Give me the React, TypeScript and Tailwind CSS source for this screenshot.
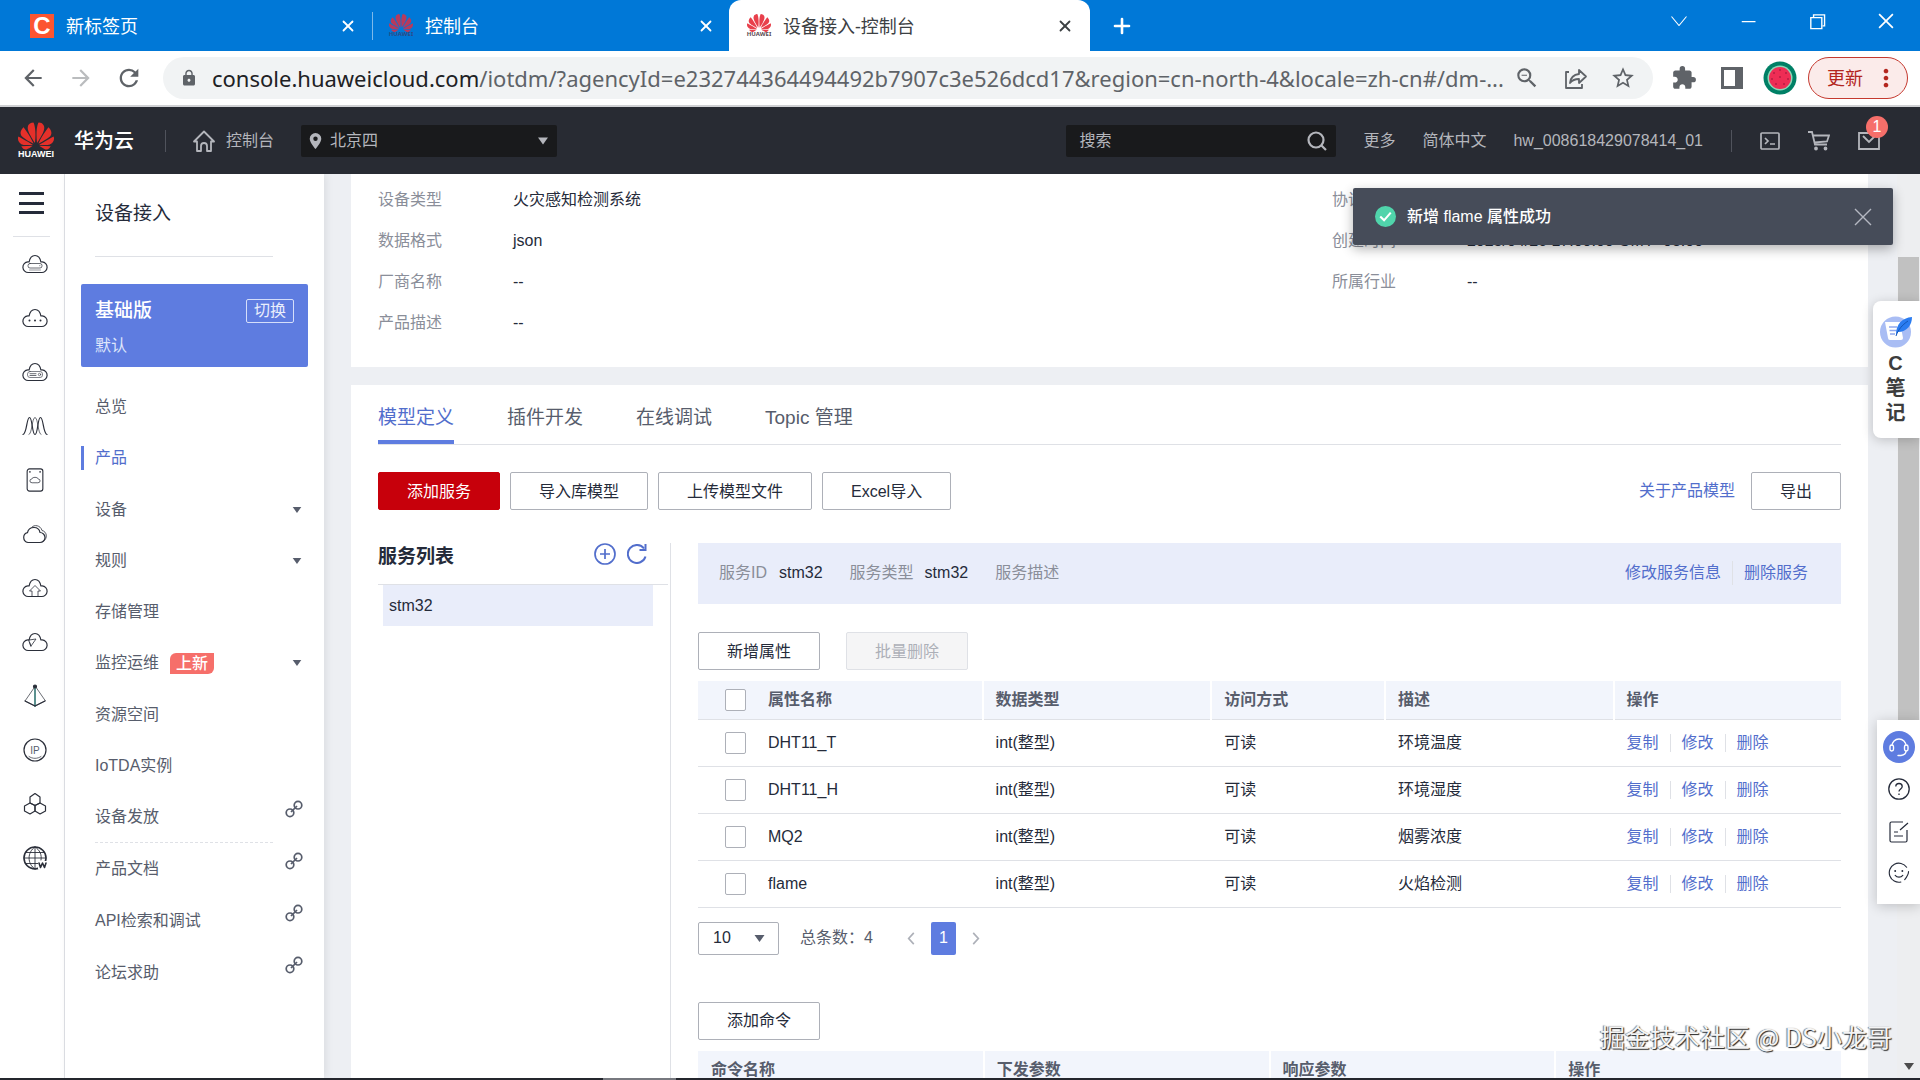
import React, { useState } from 'react';
import { Plus, X } from 'lucide-react';
import {
  MdArrowBack,
  MdArrowForward,
  MdExtension,
  MdLock,
  MdMoreVert,
  MdRefresh,
  MdStarBorder,
  MdZoomOut,
} from 'react-icons/md';
import { SiHuawei } from 'react-icons/si';
import { VscChromeClose, VscChromeMinimize, VscChromeRestore } from 'react-icons/vsc';

const CLOUD =
  'M6.5 18.5a5.3 5.3 0 0 1-.6-10.6c.6 0 1.2.1 1.2.1C7.8 4 10 1.5 13 1.5s5.2 2.5 5.9 6.5c0 0 .6-.1 1.2-.1a5.3 5.3 0 0 1-.6 10.6z';

const menuItems = [
  { label: '总览' },
  { label: '产品', active: true },
  { label: '设备', expandable: true },
  { label: '规则', expandable: true },
  { label: '存储管理' },
  { label: '监控运维', expandable: true, badge: '上新' },
  { label: '资源空间' },
  { label: 'IoTDA实例' },
];

const linkItems = ['设备发放', '产品文档', 'API检索和调试', '论坛求助'];

const properties = [
  { name: 'DHT11_T', type: 'int(整型)', access: '可读', desc: '环境温度' },
  { name: 'DHT11_H', type: 'int(整型)', access: '可读', desc: '环境湿度' },
  { name: 'MQ2', type: 'int(整型)', access: '可读', desc: '烟雾浓度' },
  { name: 'flame', type: 'int(整型)', access: '可读', desc: '火焰检测' },
];

const productInfo = [
  ['设备类型', '火灾感知检测系统'],
  ['数据格式', 'json'],
  ['厂商名称', '--'],
  ['产品描述', '--'],
];

const productMeta = [
  ['协议类型', 'MQTT'],
  ['创建时间', '2023/04/26 17:00:00 GMT+08:00'],
  ['所属行业', '--'],
];

const tabs = ['模型定义', '插件开发', '在线调试', 'Topic 管理'];

/* ---------- small pieces ---------- */

function Caret({ className = '' }: { className?: string }) {
  return (
    <svg viewBox="0 0 10 7" className={className} fill="currentColor" aria-hidden="true">
      <path d="M0 0h10L5 7z" />
    </svg>
  );
}

function Favicon({ dimmed }: { dimmed?: boolean }) {
  return (
    <span className={`flex w-6 flex-col items-center ${dimmed ? 'text-[#b73a5c]' : 'text-[#e8404c]'}`}>
      <SiHuawei size={24} className="-mt-1 -mb-1" />
      <span className={`text-[6px] leading-[6px] font-bold ${dimmed ? 'text-[#2c4a86]' : 'text-[#5a4a50]'}`}>HUAWEI</span>
    </span>
  );
}

function RailIcon({ children, box = '0 0 26 20' }: { children: React.ReactNode; box?: string }) {
  return (
    <a href="#" className="flex h-[54px] items-center justify-center pl-[6px]" aria-label="服务">
      <svg viewBox={box} className="h-6 w-[26px]" fill="none" stroke="#2b2f3a" strokeWidth="1.2" strokeLinejoin="round" strokeLinecap="round">
        {children}
      </svg>
    </a>
  );
}

function LinkIcon() {
  return (
    <svg viewBox="0 0 18 18" className="h-[18px] w-[18px]" fill="none" stroke="#575d6c" strokeWidth="1.7" aria-hidden="true">
      <circle cx="5" cy="12.8" r="3.8" />
      <circle cx="13" cy="5.2" r="3.8" />
      <path d="M6 12l6-6" />
    </svg>
  );
}

function Button({ children, primary, disabled }: { children: React.ReactNode; primary?: boolean; disabled?: boolean }) {
  const look = primary
    ? 'border-[#c7000b] bg-[#c7000b] text-white'
    : disabled
      ? 'border-[#dfe1e6] bg-[#f5f5f6] text-[#adb0b8]'
      : 'border-[#adb0b8] bg-white text-[#252b3a]';
  return (
    <button type="button" disabled={disabled} className={`h-[38px] shrink-0 rounded-xs border px-7 pt-px ${look}`}>
      {children}
    </button>
  );
}

function Checkbox({ label }: { label: string }) {
  return (
    <input
      type="checkbox"
      aria-label={label}
      className="block h-[22px] w-[21px] appearance-none rounded-xs border border-[#adb0b8] bg-white checked:bg-[#5e7ce0]"
    />
  );
}

function InfoList({ rows }: { rows: string[][] }) {
  return (
    <dl className="flex flex-col gap-[17px]">
      {rows.map(([label, value]) => (
        <div key={label} className="flex leading-6">
          <dt className="w-[135px] shrink-0 text-[#8a8e99]">{label}</dt>
          <dd className="whitespace-nowrap text-[#252b3a]">{value}</dd>
        </div>
      ))}
    </dl>
  );
}

/* ---------- browser frame ---------- */

function BrowserTabs() {
  return (
    <div className="flex h-[51px] shrink-0 bg-[#0078d7] text-lg text-white">
      <div className="flex w-[373px] items-center pl-[30px]">
        <span className="flex h-6 w-6 items-center justify-center bg-[#fc5531] font-['Liberation_Sans',sans-serif] text-2xl font-bold">C</span>
        <span className="ml-3 flex-1">新标签页</span>
        <button type="button" aria-label="关闭标签页" className="mr-[15px]"><X size={18} strokeWidth={2.4} /></button>
        <span className="h-7 w-px bg-[#7db9ea]" />
      </div>
      <div className="flex w-[356px] items-center pl-4">
        <Favicon dimmed />
        <span className="ml-3 flex-1">控制台</span>
        <button type="button" aria-label="关闭标签页" className="mr-[14px]"><X size={18} strokeWidth={2.4} /></button>
      </div>
      <div className="flex w-[361px] items-center rounded-t-xl bg-white pl-[18px] text-[#3c4043]">
        <Favicon />
        <span className="ml-3 flex-1">设备接入-控制台</span>
        <button type="button" aria-label="关闭标签页" className="mr-4"><X size={18} strokeWidth={2.4} /></button>
      </div>
      <button type="button" aria-label="新标签页" className="ml-5"><Plus size={24} strokeWidth={2.6} /></button>
      <div className="ml-auto flex h-[42px] items-center">
        <button type="button" aria-label="搜索标签页" className="flex w-[69px] justify-center">
          <svg viewBox="0 0 16 10" className="h-[10px] w-4" fill="none" stroke="white" strokeWidth="1.1"><path d="M.5.5 8 9.5 15.5.5" /></svg>
        </button>
        <button type="button" aria-label="最小化" className="flex w-[69px] justify-center"><VscChromeMinimize size={20} /></button>
        <button type="button" aria-label="还原" className="flex w-[69px] justify-center"><VscChromeRestore size={22} /></button>
        <button type="button" aria-label="关闭" className="flex w-[69px] justify-center"><VscChromeClose size={22} /></button>
      </div>
    </div>
  );
}

function AddressBar() {
  return (
    <div className="flex h-14 shrink-0 items-center border-b-2 border-[#d0d1d4] bg-white text-[#5f6368]">
      <button type="button" aria-label="后退" className="ml-5"><MdArrowBack size={26} /></button>
      <button type="button" aria-label="前进" className="ml-[22px] text-[#babcbe]"><MdArrowForward size={26} /></button>
      <button type="button" aria-label="刷新" className="ml-[21px]"><MdRefresh size={28} /></button>
      <div className="ml-5 flex h-[42px] min-w-0 flex-1 items-center rounded-full bg-[#f1f3f4] px-[17px]">
        <MdLock size={18} className="shrink-0" />
        <p className="ml-[14px] min-w-0 flex-1 text-[22px] whitespace-nowrap">
          <span className="text-[#202124]">console.huaweicloud.com</span>
          /iotdm/?agencyId=e232744364494492b7907c3e526dcd17&amp;region=cn-north-4&amp;locale=zh-cn#/dm-...
        </p>
        <button type="button" aria-label="缩放" className="ml-2"><MdZoomOut size={26} /></button>
        <button type="button" aria-label="分享" className="ml-6">
          <svg viewBox="0 0 24 24" className="h-6 w-6" fill="none" stroke="currentColor" strokeWidth="1.8" strokeLinejoin="round">
            <path d="M5 6H2v16h16v-4" />
            <path d="M6 17c.6-5.5 3.8-8.5 9-9V4l7 6.5-7 6.5v-4c-4 0-6.8 1-9 4z" />
          </svg>
        </button>
        <button type="button" aria-label="收藏" className="ml-[22px]"><MdStarBorder size={26} /></button>
      </div>
      <button type="button" aria-label="扩展程序" className="ml-[18px]"><MdExtension size={26} /></button>
      <button type="button" aria-label="侧边栏" className="ml-6">
        <svg viewBox="0 0 22 22" className="h-[22px] w-[22px]" fill="none" stroke="currentColor" strokeWidth="3">
          <path d="M1.5 1.5h19v19h-19z" />
          <path d="M15.5 1.5h5v19h-5z" fill="currentColor" />
        </svg>
      </button>
      <svg viewBox="0 0 34 34" className="ml-5 h-[34px] w-[34px]" role="img" aria-label="头像">
        <circle cx="17" cy="17" r="16.5" fill="#008066" />
        <circle cx="17" cy="17" r="12.5" fill="#8ed8b8" />
        <circle cx="17" cy="17" r="11" fill="#ee2d55" />
        <g fill="#7a1030">
          {[[17, 9], [11, 12], [23, 12], [9, 18], [25, 18], [13, 23], [21, 23], [17, 16]].map(([x, y]) => (
            <circle key={`${x}-${y}`} cx={x} cy={y} r="0.7" />
          ))}
        </g>
      </svg>
      <button type="button" className="mr-3 ml-[11px] flex h-[42px] w-[100px] items-center justify-between rounded-full border border-[#c5392f] bg-[#fbebea] pr-[7px] pl-[18px] text-lg text-[#b3261e]">
        更新
        <MdMoreVert size={28} />
      </button>
    </div>
  );
}

/* ---------- console ---------- */

function ConsoleHeader() {
  return (
    <header className="flex h-[67px] shrink-0 items-center bg-[#282b33] text-[#b4b6bc]">
      <a href="#" className="ml-[18px] flex w-9 flex-col items-center text-white">
        <SiHuawei size={36} className="-mt-1 -mb-1 text-[#e5302a]" />
        <span className="text-[9px] leading-[9px] font-bold">HUAWEI</span>
      </a>
      <span className="ml-5 text-xl font-medium text-white">华为云</span>
      <span className="ml-[31px] h-[22px] w-px bg-[#50535c]" />
      <a href="#" className="ml-[27px] flex items-center gap-[11px]">
        <svg viewBox="0 0 22 22" className="h-[22px] w-[22px]" fill="none" stroke="currentColor" strokeWidth="1.8" strokeLinejoin="round">
          <path d="M1 11.5 11 1.5l10 10h-3V21h-4v-5a3 3 0 0 0-6 0v5H4v-9.5z" />
        </svg>
        控制台
      </a>
      <div className="relative ml-[27px] flex h-8 w-[256px] items-center">
        <select aria-label="区域" className="h-full w-full appearance-none rounded-xs bg-[#191a1c] pl-[29px]">
          <option>北京四</option>
        </select>
        <svg viewBox="0 0 14 18" className="pointer-events-none absolute left-2 h-4 w-[13px]" fill="currentColor">
          <path fillRule="evenodd" d="M7 0a6.5 6.5 0 0 1 6.5 6.5C13.5 11 7 18 7 18S.5 11 .5 6.5A6.5 6.5 0 0 1 7 0zm0 4a2.5 2.5 0 1 0 0 5 2.5 2.5 0 0 0 0-5z" />
        </svg>
        <Caret className="pointer-events-none absolute right-[9px] h-2 w-[10px]" />
      </div>

      <form className="ml-auto flex h-8 w-[270px] items-center rounded-xs bg-[#191a1c] pr-[9px] pl-[13px]">
        <input type="text" aria-label="搜索" placeholder="搜索" className="min-w-0 flex-1 bg-transparent placeholder:text-[#b4b6bc]" />
        <button type="button" aria-label="搜索">
          <svg viewBox="0 0 20 20" className="h-5 w-5" fill="none" stroke="currentColor" strokeWidth="2.2">
            <circle cx="9" cy="9" r="7.5" />
            <path d="m14.5 14.5 4.5 4.5" />
          </svg>
        </button>
      </form>
      <a href="#" className="ml-[27px]">更多</a>
      <a href="#" className="ml-[27px]">简体中文</a>
      <a href="#" className="ml-[27px]">hw_008618429078414_01</a>
      <span className="ml-7 h-[22px] w-px bg-[#50535c]" />
      <button type="button" aria-label="CloudShell" className="ml-7">
        <svg viewBox="0 0 20 18" className="h-[18px] w-5" fill="none" stroke="currentColor" strokeWidth="1.7">
          <rect x="1" y="1" width="18" height="16" rx="1" />
          <path d="m5 6 3 3-3 3M10 12h5" />
        </svg>
      </button>
      <button type="button" aria-label="购物车" className="ml-7">
        <svg viewBox="0 0 22 20" className="h-5 w-[22px]" fill="none" stroke="currentColor" strokeWidth="1.8">
          <path d="M0 1h4l3 12.5h12M5 4.5h16l-2 6-12.5 1" />
          <circle cx="8" cy="17.5" r="1" />
          <circle cx="17.5" cy="17.5" r="1" />
        </svg>
      </button>
      <button type="button" aria-label="消息" className="relative mr-10 ml-7">
        <svg viewBox="0 0 22 18" className="h-[18px] w-[22px]" fill="none" stroke="currentColor" strokeWidth="1.8">
          <path d="M1 1h20v16H1z" />
          <path d="m5 4 6 6 6-6" />
        </svg>
        <span className="absolute -top-4 left-2 flex h-[22px] w-[22px] items-center justify-center rounded-full bg-[#f66f6a] text-white">1</span>
      </button>
    </header>
  );
}

function ServiceRail() {
  return (
    <nav className="w-[65px] shrink-0 border-r border-[#dfe1e6] bg-white">
      <button type="button" aria-label="服务列表" className="mt-[18px] ml-[19px] flex h-[22px] w-[25px] flex-col justify-between">
        <span className="h-[3px] w-full bg-[#252b3a]" />
        <span className="h-[3px] w-full bg-[#252b3a]" />
        <span className="h-[3px] w-full bg-[#252b3a]" />
      </button>
      <div className="mt-[22px] ml-[13px] w-[37px] border-t border-[#dfe1e6]" />
      <RailIcon>
        <path d={CLOUD} />
        <rect x="6" y="9.5" width="14" height="4.5" rx="2" strokeWidth=".7" />
        <path d="M7.5 16h11M17.5 11.7h.5" strokeWidth=".5" />
      </RailIcon>
      <RailIcon>
        <path d={CLOUD} />
        <path d="M7.5 12.5h.01M13 12.5h.01M18.5 12.5h.01" strokeWidth="2" />
      </RailIcon>
      <RailIcon>
        <path d={CLOUD} />
        <rect x="5.5" y="9.5" width="15" height="6" rx="2.5" strokeWidth=".6" />
        <path d="M8 11.7h6M8 13.5h6" strokeWidth=".7" />
        <circle cx="17.5" cy="12.5" r="1.2" strokeWidth=".6" />
      </RailIcon>
      <RailIcon>
        <path d="M1 18.5c4-1 3.5-17 6.500-17s2.500 17 5.500 17 2.500-17 5.500-17 2.500 16 6.500 17" />
        <path d="M7 18.5c3 0 3-17 6-17s3 17 6 17" strokeWidth=".7" />
      </RailIcon>
      <RailIcon box="0 0 24 26">
        <rect x="3.5" y="1" width="17" height="24" rx="2.5" />
        <path d="M8.5 16a2 2 0 0 1 0-4c.5-2.500 6.500-2.500 7 0a2 2 0 0 1 0 4z" strokeWidth=".8" />
        <path d="M6.5 4.2h.01M17.5 4.2h.01" strokeWidth="1.8" />
      </RailIcon>
      <RailIcon>
        <path d="M6 18.5a5 5 0 0 1-.5-9.8C6 5.5 8.5 3.5 12 3.5s5.500 2 6 5a5 5 0 0 1 0 10z" />
        <path d="M10 3c2-2.500 8.500-2 10 3.500 5 1 6 8 1.500 10.500" strokeWidth=".8" />
      </RailIcon>
      <RailIcon>
        <path d={CLOUD} />
        <path d="M10 18v-5H7.500L13 7.500l5.500 5.500H16v5" strokeWidth=".8" />
      </RailIcon>
      <RailIcon>
        <path d={CLOUD} />
        <path d="m7 8 7-1-5 7zM9 14l-1.500-4" strokeWidth=".8" />
      </RailIcon>
      <RailIcon box="0 0 24 24">
        <path d="M12 2.5 2 17l10 5 10-5z" strokeWidth=".7" />
        <path d="M12 2v20" strokeWidth="1.8" stroke="#4a8583" />
        <path d="m2 17 10 5 10-5" />
        <circle cx="12" cy="2.5" r="1.5" fill="#2b2f3a" />
      </RailIcon>
      <RailIcon box="0 0 24 24">
        <circle cx="12" cy="12" r="11" />
        <text x="12" y="15.5" textAnchor="middle" fontSize="10" fill="#575d6c" stroke="none">IP</text>
        <path d="M6 18.5c3.500 2.500 8.500 2.500 12 0" strokeWidth=".7" />
      </RailIcon>
      <RailIcon box="0 0 24 24">
        <path d="M7 11V5l5-3.500L17 5v6l-5 2.500z" />
        <path d="m12 13.500-5-2.500-5.500 3v5L7 22l5-3z" />
        <path d="m12 13.500 5-2.500 5.500 3v5L17 22l-5-3z" />
      </RailIcon>
      <RailIcon box="0 0 24 24">
        <circle cx="12" cy="12" r="11" strokeWidth="1.6" />
        <path d="M1 12h22M3 6.500h18M3 17.500h12M12 1v22M12 1C4 6 4 18 12 23M12 1c5 3 7 8 6 13" strokeWidth=".9" />
        <path d="M15 15h9v8h-9z" fill="white" stroke="none" />
        <path d="m16 17 1.500 4.500L19.500 17l2 4.500L23 17" strokeWidth="1.6" />
      </RailIcon>
    </nav>
  );
}

function Sidebar() {
  return (
    <aside className="z-10 w-[259px] shrink-0 bg-white pl-4 text-[#575d6c] shadow-[2px_0_8px_rgba(0,0,0,0.08)]">
      <h2 className="ml-[14px] pt-[26px] text-[19px] leading-7 text-[#252b3a]">设备接入</h2>
      <div className="mt-[28px] ml-[14px] w-[178px] border-t border-[#dfe1e6]" />
      <section className="mt-[27px] mr-4 h-[83px] rounded-xs bg-[#5e7ce0] px-[14px] pt-[15px] text-white">
        <div className="flex items-center justify-between">
          <h3 className="text-[19px] leading-6 font-medium">基础版</h3>
          <button type="button" className="h-6 w-12 rounded-xs border border-[#d5defa] leading-[22px] text-[#e9eefc]">切换</button>
        </div>
        <p className="mt-[11px] leading-6 text-[#dfe6fb]">默认</p>
      </section>
      <ul className="mt-[14px]">
        {menuItems.map((item) => (
          <li key={item.label} className={`flex items-center ${item.active || item.badge ? 'h-13' : 'h-[51px]'}`}>
            <a
              href="#"
              className={`flex flex-1 items-center border-l-3 pl-[11px] leading-6 ${item.active ? 'border-[#5e7ce0] text-[#526ecc]' : 'border-transparent'}`}
            >
              {item.label}
              {item.badge && (
                <span className="ml-[11px] rounded-tl-md rounded-br-md bg-[#f66f6a] px-[6px] leading-[21px] font-medium text-white">{item.badge}</span>
              )}
              {item.expandable && <Caret className="mr-[22px] ml-auto h-[6px] w-[10px]" />}
            </a>
          </li>
        ))}
        {linkItems.map((label, i) => (
          <li key={label}>
            <a href="#" className="flex h-13 items-center">
              <span className={`ml-[14px] flex h-13 w-[178px] items-center border-b border-dashed ${i === 0 ? 'border-[#dfe1e6]' : 'border-transparent'}`}>{label}</span>
              <span className="mb-4 ml-3"><LinkIcon /></span>
            </a>
          </li>
        ))}
      </ul>
    </aside>
  );
}

function ServiceList() {
  return (
    <div className="w-[293px] shrink-0 border-r border-[#dfe1e6]">
      <div className="mr-[2px] flex h-[42px] items-center border-b border-[#dfe1e6] pr-[21px] pb-5">
        <h3 className="pt-[6px] text-[19px] leading-7 font-bold text-[#252b3a]">服务列表</h3>
        <button type="button" aria-label="添加服务" className="ml-auto text-[#526ecc]">
          <svg viewBox="0 0 22 22" className="h-[22px] w-[22px]" fill="none" stroke="currentColor" strokeWidth="1.7">
            <circle cx="11" cy="11" r="10" />
            <path d="M11 6v10M6 11h10" />
          </svg>
        </button>
        <button type="button" aria-label="刷新" className="ml-[11px] text-[#526ecc]">
          <svg viewBox="0 0 20 20" className="h-5 w-5" fill="none" stroke="currentColor" strokeWidth="2">
            <path d="M18.5 12.5A9 9 0 1 1 17 4.500" />
            <path d="M18.5 0v6h-6" />
          </svg>
        </button>
      </div>
      <button type="button" className="ml-[5px] block h-[41px] w-[270px] bg-[#e9edfa] pl-[6px] text-left text-[#252b3a]">stm32</button>
    </div>
  );
}

function RowActions() {
  return (
    <div className="flex items-center text-[#526ecc]">
      <a href="#">复制</a>
      <span className="mx-[11px] h-[18px] w-px bg-[#dfe1e6]" />
      <a href="#">修改</a>
      <span className="mx-[11px] h-[18px] w-px bg-[#dfe1e6]" />
      <a href="#">删除</a>
    </div>
  );
}

function PropertyTable() {
  return (
    <table className="mt-[11px] w-full table-fixed border-collapse text-left text-[#252b3a]">
      <thead>
        <tr className="h-[38px] border-b border-[#dfe1e6] bg-[#f2f5fc] text-[#575d6c]">
          <th className="w-14 pl-[27px]"><Checkbox label="全选" /></th>
          <th className="w-1/5 px-[14px]">属性名称</th>
          <th className="w-1/5 border-l-2 border-white px-3">数据类型</th>
          <th className="w-[15.2%] border-l-2 border-white px-3">访问方式</th>
          <th className="w-1/5 border-l-2 border-white px-3">描述</th>
          <th className="border-l-2 border-white px-3">操作</th>
        </tr>
      </thead>
      <tbody>
        {properties.map((p) => (
          <tr key={p.name} className="h-[47px] border-b border-[#dfe1e6]">
            <td className="pt-px pl-[27px]"><Checkbox label={p.name} /></td>
            <td className="px-[14px] pt-px">{p.name}</td>
            <td className="px-[13px] pt-px">{p.type}</td>
            <td className="px-[13px] pt-px">{p.access}</td>
            <td className="px-[13px] pt-px">{p.desc}</td>
            <td className="px-[13px] pt-px"><RowActions /></td>
          </tr>
        ))}
      </tbody>
    </table>
  );
}

function Pagination() {
  return (
    <div className="mt-[14px] flex h-[33px] items-center text-[#575d6c]">
      <div className="relative flex h-full w-[81px] items-center">
        <select aria-label="每页条数" className="h-full w-full appearance-none rounded-xs border border-[#adb0b8] bg-white pl-[14px] text-[#252b3a]">
          <option>10</option>
          <option>20</option>
        </select>
        <Caret className="pointer-events-none absolute right-[14px] h-[7px] w-[11px]" />
      </div>
      <span className="ml-[21px]">总条数：4</span>
      <button type="button" aria-label="上一页" className="ml-[34px] text-[#adb0b8]">
        <svg viewBox="0 0 8 14" className="h-[13px] w-2" fill="none" stroke="currentColor" strokeWidth="1.8"><path d="M7 1 1.5 7 7 13" /></svg>
      </button>
      <button type="button" className="ml-4 h-full w-[25px] rounded-xs bg-[#5e7ce0] text-white">1</button>
      <button type="button" aria-label="下一页" className="ml-4 text-[#adb0b8]">
        <svg viewBox="0 0 8 14" className="h-[13px] w-2" fill="none" stroke="currentColor" strokeWidth="1.8"><path d="m1 1 5.5 6L1 13" /></svg>
      </button>
    </div>
  );
}

function ModelPanel() {
  const [tab, setTab] = useState(tabs[0]);

  return (
    <section className="mt-[18px] flex flex-1 flex-col bg-white px-[27px]">
      <div role="tablist" className="flex h-15 shrink-0 gap-[53px] border-b border-[#dfe1e6] text-[19px]">
        {tabs.map((t) => (
          <button
            key={t}
            type="button"
            role="tab"
            aria-selected={t === tab}
            onClick={() => setTab(t)}
            className={`border-b-4 pt-3 ${t === tab ? 'border-[#5e7ce0] text-[#526ecc]' : 'border-transparent text-[#575d6c]'}`}
          >
            {t}
          </button>
        ))}
      </div>
      <div className="mt-[27px] flex items-center gap-[10px]">
        <Button primary>添加服务</Button>
        <Button>导入库模型</Button>
        <Button>上传模型文件</Button>
        <Button>Excel导入</Button>
        <a href="#" className="mr-[6px] ml-auto text-[#526ecc]">关于产品模型</a>
        <Button>导出</Button>
      </div>
      <div className="mt-[33px] flex flex-1">
        <ServiceList />
        <div className="ml-[27px] min-w-0 flex-1">
          <div className="flex h-[61px] items-center bg-[#e9edfa] pr-[33px] pb-[2px] pl-[21px] text-[#8a8e99]">
            <span>服务ID</span>
            <span className="ml-3 text-[#252b3a]">stm32</span>
            <span className="ml-[27px]">服务类型</span>
            <span className="ml-[11px] text-[#252b3a]">stm32</span>
            <span className="ml-[27px]">服务描述</span>
            <a href="#" className="ml-auto text-[#526ecc]">修改服务信息</a>
            <span className="mx-[11px] h-6 w-px bg-[#dfe1e6]" />
            <a href="#" className="text-[#526ecc]">删除服务</a>
          </div>
          <div className="mt-[28px] flex gap-[26px]">
            <Button>新增属性</Button>
            <Button disabled>批量删除</Button>
          </div>
          <PropertyTable />
          <Pagination />
          <div className="mt-[47px] flex">
            <Button>添加命令</Button>
          </div>
          <table className="mt-[11px] w-full table-fixed border-collapse text-left text-[#575d6c]">
            <thead>
              <tr className="h-[38px] bg-[#f2f5fc]">
                <th className="px-[13px]">命令名称</th>
                <th className="border-l-2 border-white px-3">下发参数</th>
                <th className="border-l-2 border-white px-3">响应参数</th>
                <th className="border-l-2 border-white px-3">操作</th>
              </tr>
            </thead>
          </table>
        </div>
      </div>
    </section>
  );
}

/* ---------- things floating over the page ---------- */

function Toast() {
  return (
    <div role="status" className="absolute top-[14px] right-[27px] flex h-[57px] w-[540px] items-center rounded-xs bg-[#464c59] pr-[18px] pl-[22px] font-medium text-white shadow-[0_4px_12px_rgba(0,0,0,0.3)]">
      <svg viewBox="0 0 22 22" className="h-[21px] w-[21px]" aria-hidden="true">
        <circle cx="11" cy="11" r="11" fill="#50d4ab" />
        <path d="m5.5 11 4 4 7-8" fill="none" stroke="white" strokeWidth="2.2" />
      </svg>
      <span className="ml-[11px] flex-1">新增 flame 属性成功</span>
      <button type="button" aria-label="关闭" className="text-[#b4b8c2]">
        <svg viewBox="0 0 24 24" className="h-6 w-6" fill="none" stroke="currentColor" strokeWidth="1.4"><path d="m4 4 16 16M20 4 4 20" /></svg>
      </button>
    </div>
  );
}

function NoteWidget() {
  return (
    <button type="button" className="absolute top-[127px] right-0 flex h-[137px] w-[47px] flex-col items-center rounded-l-lg bg-white pt-[13px] pr-[2px] text-xl leading-[25px] font-bold text-[#3d3d3d] shadow-[0_2px_12px_rgba(0,0,0,0.2)]">
      <svg viewBox="0 0 34 34" className="mb-[3px] h-[34px] w-[34px]" aria-hidden="true">
        <circle cx="16.5" cy="18" r="15.5" fill="#a9bdf4" />
        <path d="M6 8h15l3 16a2 2 0 0 1-2 2H11a2 2 0 0 1-2-2z" fill="white" />
        <path d="M10 13h8M10.5 16.5h7M11 20h5" stroke="#8fa8ee" strokeWidth="1.4" />
        <path d="M17 21C17 10 23 4 33 3c0 8-5 15-14 15z" fill="#2b7cf0" />
        <path d="M17 22c2-6 6-11 12-15" stroke="#1456b8" strokeWidth="1" fill="none" />
      </svg>
      <span>C</span>
      <span>笔</span>
      <span>记</span>
    </button>
  );
}

function HelpDock() {
  return (
    <div className="absolute top-[546px] right-0 flex h-[184px] w-[43px] flex-col items-center bg-white pt-[11px] text-[#252b3a] shadow-[0_2px_12px_rgba(0,0,0,0.2)]">
      <button type="button" aria-label="在线客服" className="flex h-8 w-8 items-center justify-center rounded-full bg-[#5e7ce0]">
        <svg viewBox="0 0 22 22" className="h-[22px] w-[22px]" fill="none" stroke="white" strokeWidth="1.4">
          <path d="M4 10a7 7 0 0 1 14 0" />
          <rect x="2" y="9" width="3.5" height="6" rx="1.7" />
          <rect x="16.5" y="9" width="3.5" height="6" rx="1.7" />
          <path d="M18 15c0 3-2 4-5 4.5M10 19.5h3" strokeLinecap="round" />
        </svg>
      </button>
      <button type="button" aria-label="帮助" className="mt-[15px]">
        <svg viewBox="0 0 22 22" className="h-[22px] w-[22px]" fill="none" stroke="currentColor" strokeWidth="1.3">
          <circle cx="11" cy="11" r="10.2" />
          <path d="M7.8 8.5c0-4 6.4-4 6.4 0 0 2.3-3.2 2.5-3.2 5M11 15.5V17" />
        </svg>
      </button>
      <button type="button" aria-label="反馈" className="mt-[21px]">
        <svg viewBox="0 0 20 22" className="h-[22px] w-5" fill="none" stroke="currentColor" strokeWidth="1.2">
          <path d="M14 1H2.5A1.5 1.5 0 0 0 1 2.5v17A1.5 1.5 0 0 0 2.5 21h14a1.5 1.5 0 0 0 1.5-1.5V9" />
          <path d="m19 2-8 7M5 11h4M5 15h9" />
        </svg>
      </button>
      <button type="button" aria-label="评价" className="mt-[19px]">
        <svg viewBox="0 0 22 22" className="h-[21px] w-[22px]" fill="none" stroke="currentColor" strokeWidth="1.2" strokeLinecap="round">
          <path d="M19 5.5A10 10 0 1 0 13 21M17 18.5c2-2.5 4-7 4-8.500" />
          <path d="M7 14c2 2.5 6 2.5 8 0" />
          <path d="M7 9.5h.01M14.5 9.5h.01" strokeWidth="2" />
        </svg>
      </button>
    </div>
  );
}

export default function App() {
  return (
    <div className="flex h-screen flex-col overflow-hidden bg-white font-['Liberation_Sans','Noto_Sans_CJK_SC',sans-serif] text-base">
      <div className="shrink-0 font-['Noto_Sans','Noto_Sans_CJK_SC',sans-serif]">
        <BrowserTabs />
        <AddressBar />
      </div>
      <ConsoleHeader />
      <div className="relative flex min-h-0 flex-1 overflow-hidden">
        <ServiceRail />
        <Sidebar />
        <main className="flex min-w-0 flex-1 flex-col bg-[#edeff3] pr-[29px] pl-[27px]">
          <section className="flex h-[193px] shrink-0 bg-white px-[27px] pt-[14px]">
            <div className="w-[65.2%]"><InfoList rows={productInfo} /></div>
            <InfoList rows={productMeta} />
          </section>
          <ModelPanel />
        </main>
        {/* page scrollbar */}
        <div className="flex w-[23px] shrink-0 flex-col items-center bg-[#edeef0] pt-[83px] pb-2 text-[#4c4c4c]">
          <div className="h-[560px] w-[21px] bg-[#c1c1c1]" />
          <Caret className="mt-auto h-[7px] w-3" />
        </div>
        <Toast />
        <NoteWidget />
        <HelpDock />
        <p className="absolute right-7 bottom-6 font-['Noto_Sans_CJK_SC',sans-serif] text-[25px] leading-9 whitespace-nowrap text-[#f4f4f4] [text-shadow:1px_1px_1px_#222,-1px_0_1px_#777]">
          掘金技术社区 @ DS小龙哥
        </p>
      </div>
      <div className="h-[2px] shrink-0 bg-[#24262d]">
        <div className="ml-[31.4%] h-full w-[73px] bg-[#77797f]" />
      </div>
    </div>
  );
}
